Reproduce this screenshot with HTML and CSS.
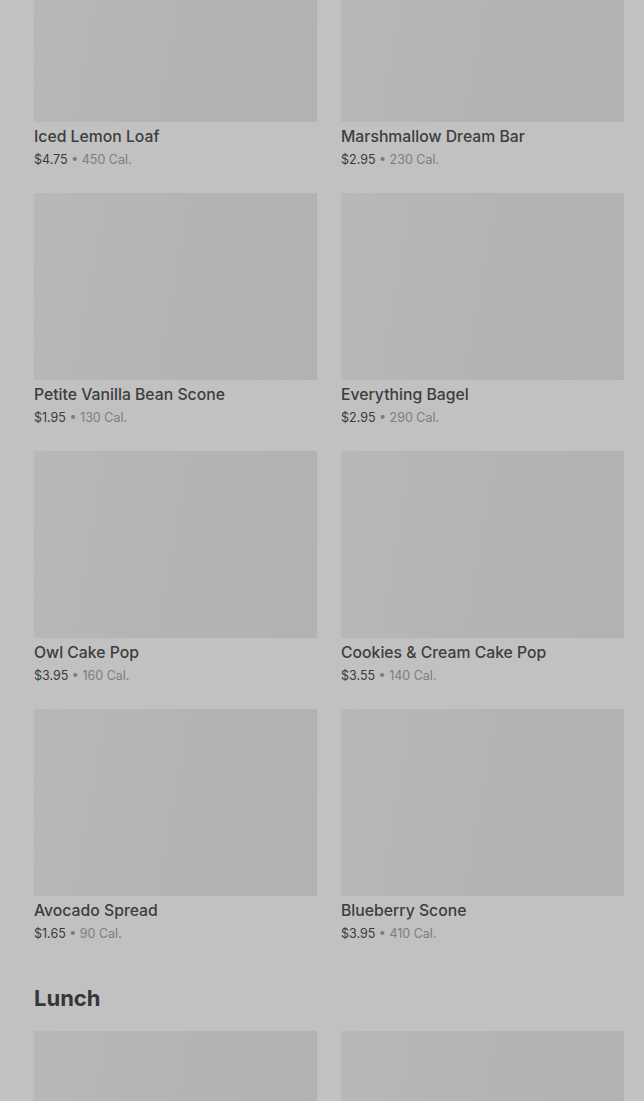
FILE: index.html
```html
<!DOCTYPE html>
<html lang="en">
<head>
<meta charset="utf-8">
<title>Menu</title>
<link rel="stylesheet" href="styles.css">
</head>
<body>
<main class="menu">
  <section class="section section-first">
    <div class="grid">
      <div class="card"><div class="thumb"></div><div class="name">Iced Lemon Loaf</div><div class="meta"><span class="price">$4.75</span> • <span class="cal">450 Cal.</span></div></div>
      <div class="card"><div class="thumb"></div><div class="name">Marshmallow Dream Bar</div><div class="meta"><span class="price">$2.95</span> • <span class="cal">230 Cal.</span></div></div>
      <div class="card"><div class="thumb"></div><div class="name">Petite Vanilla Bean Scone</div><div class="meta"><span class="price">$1.95</span> • <span class="cal">130 Cal.</span></div></div>
      <div class="card"><div class="thumb"></div><div class="name">Everything Bagel</div><div class="meta"><span class="price">$2.95</span> • <span class="cal">290 Cal.</span></div></div>
      <div class="card"><div class="thumb"></div><div class="name">Owl Cake Pop</div><div class="meta"><span class="price">$3.95</span> • <span class="cal">160 Cal.</span></div></div>
      <div class="card"><div class="thumb"></div><div class="name">Cookies &amp; Cream Cake Pop</div><div class="meta"><span class="price">$3.55</span> • <span class="cal">140 Cal.</span></div></div>
      <div class="card"><div class="thumb"></div><div class="name">Avocado Spread</div><div class="meta"><span class="price">$1.65</span> • <span class="cal">90 Cal.</span></div></div>
      <div class="card"><div class="thumb"></div><div class="name">Blueberry Scone</div><div class="meta"><span class="price">$3.95</span> • <span class="cal">410 Cal.</span></div></div>
    </div>
  </section>
  <section class="section">
    <h2 class="section-title">Lunch</h2>
    <div class="grid">
      <div class="card"><div class="thumb"></div></div>
      <div class="card"><div class="thumb"></div></div>
    </div>
  </section>
</main>
</body>
</html>
```
FILE: styles.css
```css
html, body {
  margin: 0;
  padding: 0;
  background: #c1c1c1;
  overflow: hidden;
}
body {
  font-family: Inter, Roboto, "Liberation Sans", sans-serif;
  color: #3a3a3a;
}
.menu {
  padding: 0 20px 0 34px;
  margin-top: -65px;
}
.grid {
  display: grid;
  grid-template-columns: 283px 283px;
  column-gap: 24px;
  row-gap: 24px;
}
.card {
  display: flex;
  flex-direction: column;
}
.thumb {
  height: 187px;
  background: linear-gradient(100deg, #b8b8b8 0%, #b4b4b4 50%, #b2b2b2 100%);
}
.name {
  margin-top: 5px;
  font-size: 15.75px;
  line-height: 20px;
  font-weight: 500;
  color: #3d3d3d;
}
.meta {
  margin-top: 4px;
  font-size: 12.5px;
  line-height: 18px;
  color: #7d7d7d;
}
.price {
  color: #3a3a3a;
}
.cal {
  color: #7d7d7d;
}
.section-title {
  margin: 41px 0 19px;
  font-size: 22px;
  line-height: 28px;
  font-weight: 700;
  color: #363636;
}
```
